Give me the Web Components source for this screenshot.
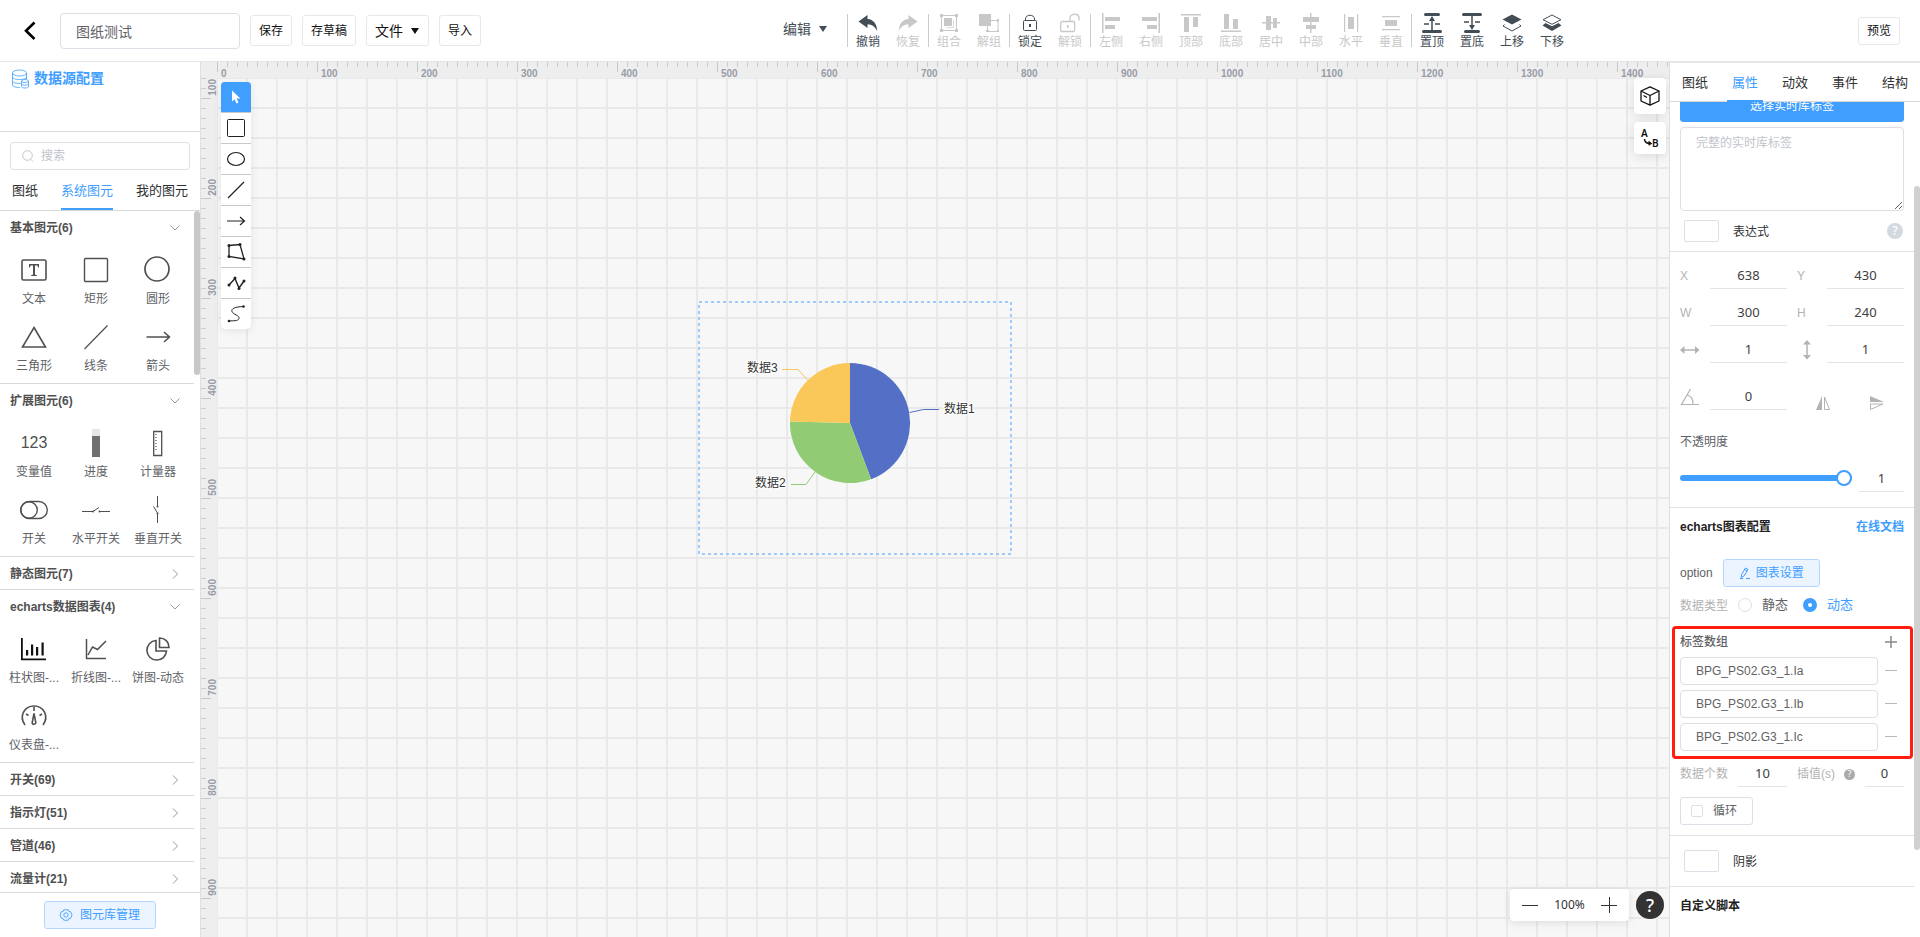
<!DOCTYPE html>
<html lang="zh-CN">
<head>
<meta charset="utf-8">
<title>图纸测试</title>
<style>
  html, body { margin: 0; height: 100%; }
  body {
    font: 12px/16px "Liberation Sans", "Noto Sans CJK SC", sans-serif;
    color: #606266;
    background: #fff;
    --blue: #409eff;
    --line: #dcdfe6;
    --digits: "Noto Sans", "Noto Sans CJK SC", sans-serif;
  }
</style>
</head>
<body>
<editor-app></editor-app>

<script>
/* ---------- icons: [width, height, markup] ---------- */
const S = 'fill="none" stroke="currentColor"';
const ICONS = {
  back: [14, 20, `<path ${S} stroke-width="2.6" d="M11.5 1.5L3 9.8l8.500 8.200"/>`],
  caret: [10, 10, `<path fill="currentColor" d="M1 2h8L5 8z"/>`],
  db: [18, 20, `<g ${S} stroke-width=".8"><ellipse cx="7.500" cy="4" rx="7" ry="3"/><path d="M.5 4v12c0 1.500 3 2.500 7.500 2.500M14.500 4v6M.5 8c0 1.500 3 2.500 7 2.500s7-1 7-2.500M.5 12c0 1.500 3 2.500 8 2.500"/><ellipse cx="13" cy="12" rx="3.500" ry="1.500"/><path d="M9.500 12v5.500c0 1 1.500 1.500 3.500 1.500s3.500-.5 3.500-1.500V12M9.500 14.700c0 1 1.500 1.500 3.500 1.500s3.500-.5 3.500-1.500"/></g>`],
  search: [12, 12, `<g ${S}><circle cx="5.500" cy="5.500" r="4.800"/><path d="M9 9.500l2 2"/></g>`],
  down: [10, 10, `<path ${S} d="M.5 2.500L5 7l4.500-4.500"/>`],
  right: [10, 10, `<path ${S} d="M3 .5L7.500 5 3 9.500"/>`],
  gear: [12, 12, `<g ${S} stroke-width=".9"><path d="M3.800.8h4.400l.7 1.700 1.800.3L12 6l-1.300 3.200-1.800.3-.7 1.700H3.800l-.7-1.700-1.800-.3L0 6l1.300-3.200 1.800-.3z"/><circle cx="6" cy="6" r="2.200"/></g>`],
  pencil: [12, 12, `<g ${S}><path d="M2.500 7.500L6.500 1l2.500 1.500L5 9l-2.700 1.500zM5.700 2.500l2.500 1.500M1 11.500h3M7 11.500h4"/></g>`],
  plus: [12, 12, `<path ${S} stroke-width="1.500" d="M6 0v12M0 6h12"/>`],
  minus: [12, 12, `<path ${S} d="M0 5.500h12"/>`],
  bigplus: [16, 16, `<path ${S} d="M8.500 0v16M0 8.500h16"/>`],
  bigminus: [16, 16, `<path ${S} d="M0 8.500h16"/>`],

  undo: [20, 20, `<path fill="currentColor" d="M.5 8.500L9.500 2v4c6 .5 9.500 5 9.700 12.300C17 13.500 14 11.500 9.500 11.300V15z"/>`],
  redo: [20, 20, `<path fill="currentColor" d="M19.500 8.500L10.500 2v4C4.500 6.500 1 11 .8 18.300 3 13.500 6 11.500 10.500 11.300V15z"/>`],
  group: [20, 20, `<path ${S} d="M2.500 2.500h15v15h-15z"/><path fill="currentColor" d="M1 1h3v3H1zM16 1h3v3h-3zM1 16h3v3H1zM16 16h3v3h-3zM5 5h8v8H5z"/><path fill="currentColor" opacity=".6" d="M14 7h1v8H7v-1h7z"/>`],
  ungroup: [20, 20, `<path fill="currentColor" d="M0 1h12v12H0z"/><path ${S} d="M12 7.500h7v11H8.500V13"/><path fill="currentColor" d="M18 6h2v3h-2zM18 17h2v2h-2zM7 17h3v2H7z"/>`],
  lock: [20, 20, `<g ${S}><rect x="3.500" y="7.500" width="13" height="10" rx="1"/><path d="M5.500 7.500V6C5.500 1 14.500 1 14.500 6v1.500"/></g><path fill="currentColor" d="M9 11h2v3H9z"/>`],
  unlock: [20, 20, `<g ${S} stroke-width="1.300"><rect x=".7" y="8.500" width="14" height="10" rx="1.500"/><path d="M10 8.500V5C10 0 19 0 19 5v2.500"/></g><path fill="currentColor" d="M7 12h1.500v3H7z"/>`],
  aleft: [20, 20, `<path fill="currentColor" d="M1 0h1.500v20H1zM4 4h15v4H4zM4 12h10v4H4z"/>`],
  aright: [20, 20, `<path fill="currentColor" d="M17.500 0H19v20h-1.500zM1 4h15v4H1zM6 12h10v4H6z"/>`],
  atop: [20, 20, `<path fill="currentColor" d="M0 1h20v1.500H0zM3 4h5v15H3zM12 4h5v10h-5z"/>`],
  abottom: [20, 20, `<path fill="currentColor" d="M0 17.500h20V19H0zM3 1h5v15H3zM12 6h5v10h-5z"/>`],
  amiddle: [20, 20, `<path fill="currentColor" d="M1 9h18v1.500H1zM5 3h5v14H5zM12 5h4v10h-4z"/>`],
  acenter: [20, 20, `<path fill="currentColor" d="M9 0h1.500v20H9zM2 4h16v5H2zM5 12h10v4H5z"/>`],
  hdist: [20, 20, `<path fill="currentColor" d="M3 1h1.200v18H3zM16 1h1.200v18H16zM7 4h6v12H7z"/>`],
  vdist: [20, 20, `<path fill="currentColor" d="M1 3h18v1.200H1zM1 16h18v1.200H1zM4 7h12v6H4z"/>`],
  totop: [20, 20, `<g ${S} stroke-width="3" stroke-linecap="round"><path d="M3.500 1.500h13M1.500 18.500h17"/></g><path ${S} stroke-width="1.500" d="M10 17V6M2 11h5M13 11h5"/><path fill="currentColor" d="M10 3l3 5H7z"/>`],
  tobottom: [20, 20, `<g ${S} stroke-width="3" stroke-linecap="round"><path d="M1.500 1.500h17M3.500 18.500h13"/></g><path ${S} stroke-width="1.500" d="M10 3v11M2 9h5M13 9h5"/><path fill="currentColor" d="M10 17l3-5H7z"/>`],
  up: [20, 20, `<path fill="currentColor" d="M10 1.500l9.500 5-9.500 5-9.500-5z"/><path ${S} d="M2.500 11.500L1 13l9 5 9-5-1.500-1.500"/>`],
  lower: [20, 20, `<path ${S} d="M10 2l9 4.700-9 4.600-9-4.600z"/><path fill="currentColor" d="M3.500 10l6.500 3.300L16.500 10l3 2.500L10 18 .5 12.500z"/>`],

  pointer: [16, 16, `<path fill="currentColor" d="M4 1.500v11l2.600-2.200 1.900 4.200 2-.9-1.900-4h3.800z"/>`],
  tRect: [20, 20, `<rect ${S} x="1.500" y="1.500" width="17" height="17" rx="1"/>`],
  tEllipse: [20, 20, `<ellipse ${S} stroke-width="1.200" cx="10" cy="10" rx="8.500" ry="6.500"/>`],
  tLine: [20, 20, `<path ${S} stroke-width="1.200" d="M2 18L18 2"/>`],
  tArrow: [20, 20, `<path ${S} stroke-width="1.200" d="M1 10h17M14 6l4.500 4-4.500 4"/>`],
  tPoly: [20, 20, `<path ${S} stroke-width="1.300" d="M3 3.500l11-1 4 14.500-15-2.500z"/><g fill="currentColor"><circle cx="3" cy="3.500" r="1.500"/><circle cx="14" cy="2.500" r="1.500"/><circle cx="18" cy="17" r="1.500"/><circle cx="3" cy="14.500" r="1.500"/></g>`],
  tZig: [20, 20, `<path ${S} stroke-width="1.400" d="M3 12l6-6.500L13 15l5-7"/><g fill="currentColor"><circle cx="3" cy="12" r="1.500"/><circle cx="9" cy="5" r="1.500"/><circle cx="13" cy="15.500" r="1.500"/><circle cx="18" cy="8" r="1.500"/></g>`],
  tCurve: [20, 20, `<path ${S} d="M17 2.500C9 3 5 4.500 6 7.500s8 4 7 7S7 16.500 3 17"/><g fill="currentColor"><circle cx="17.500" cy="2.500" r="1.300"/><circle cx="3" cy="17" r="1.300"/></g>`],
  cube: [20, 20, `<g ${S} stroke-width="1.300" stroke-linejoin="round"><path d="M10 .8l9 4.200v10l-9 4.200L1 15V5zM1 5l9 4.500L19 5M10 9.500V19"/><path d="M3.500 9.500l3.500 2"/></g>`],
  ab: [20, 20, `<g fill="currentColor" font-family="Noto Sans, sans-serif" font-size="10" font-weight="600"><text x="1" y="9">A</text><text x="12" y="19">B</text></g><path ${S} stroke-width="1.500" d="M4.500 11c0 3 2.500 4.500 6 4.500M8.500 13.500l2.500 2-2.500 1.500"/>`],

  text: [28, 28, `<g ${S} stroke-width="1.600"><rect x="2" y="4" width="24" height="20" rx="1.500"/></g><path fill="currentColor" d="M9 8h10v3.500h-1L17.500 9.500H15v9.300l1.800.2v1H11.200v-1l1.800-.2V9.500h-2.500L10 11.500H9z"/>`],
  rect: [28, 28, `<rect ${S} stroke-width="1.400" x="2.500" y="2.500" width="23" height="23" rx="1"/>`],
  circle: [28, 28, `<circle ${S} stroke-width="1.700" cx="13" cy="13" r="12"/>`],
  triangle: [28, 28, `<path ${S} stroke-width="1.600" d="M14 4.500L25.500 24h-23z"/>`],
  line: [28, 28, `<path ${S} stroke-width="1.200" d="M2.500 26L25.500 2.500"/>`],
  arrow: [28, 28, `<path ${S} stroke-width="1.500" d="M2.500 14h22M20 9l5.500 5-5.500 5"/>`],
  n123: [28, 28, `<text x="14" y="19" text-anchor="middle" fill="currentColor" font-family="Liberation Sans, sans-serif" font-size="16">123</text>`],
  progress: [28, 28, `<path fill="#e6e6e6" d="M10 0h8v7h-8z"/><path fill="#707070" d="M10 7h8v21h-8z"/>`],
  gauge: [28, 28, `<path ${S} stroke-width="1.300" d="M9.700 2.500h8v24h-8z"/><path ${S} stroke-width="2" stroke-dasharray="1 2" opacity=".6" d="M12 5v18"/>`],
  toggle: [28, 28, `<g ${S} stroke-width="1.400"><rect x=".8" y="5.500" width="26.500" height="17" rx="8.500"/><circle cx="9" cy="14" r="8.300"/></g>`],
  hswitch: [28, 28, `<g ${S}><path d="M0 15.500h11l6-4M17 15.500h11"/></g><circle cx="11" cy="15.500" r="1" fill="currentColor"/><circle cx="17.500" cy="15.500" r="1" fill="currentColor"/>`],
  vswitch: [28, 28, `<g ${S}><path d="M13.500 0v10.500M9.500 10.500l4 6.500v10"/></g><circle cx="13.500" cy="10.500" r="1" fill="currentColor"/><circle cx="13.500" cy="17.500" r="1" fill="currentColor"/>`],
  bars: [28, 28, `<path fill="#111" d="M1 3h1.800v20.500H26v1.700H1zM6 15h2.200v5.500H6zM11 9.500h2.200v11H11zM16 12h2.200v8.500H16zM21.500 7.500h2.200v13h-2.200z"/>`],
  trend: [28, 28, `<g ${S} stroke-width="1.500"><path d="M4.500 4v19.500H24M6 20l4.500-8 5 2.500L24 6"/></g>`],
  pie: [28, 28, `<g ${S} stroke-width="1.600"><path d="M12 5.500A9.800 9.800 0 1 0 22.500 16H12z"/><path d="M15.500 3v9.500H25C25 7 21 3 15.500 3z"/></g>`],
  dial: [28, 28, `<g ${S} stroke-width="1.600"><path d="M5 23C-1.500 14 4.500 4 14 4s15.500 10 9 19"/><path d="M14 5v4M6 12l2.500 1.500M22 12l-2.500 1.500"/><path d="M14 11.500l1.800 9a1.800 1.800 0 0 1-3.600 0z"/></g>`],

  hsize: [20, 20, `<path ${S} stroke-width="1.500" d="M3 10h14"/><path fill="currentColor" d="M0 10l4.500-4v8zM19.500 10L15 6v8z"/>`],
  vsize: [20, 20, `<path ${S} stroke-width="1.500" d="M10 3v14"/><path fill="currentColor" d="M10 0l4 4.500H6zM10 19.500l4-4.500H6z"/>`],
  angle: [20, 20, `<path ${S} stroke-width="1.200" d="M19 17.500H1.500L10.500 2M7.500 8c3.500 1 5.500 4.500 5.500 9"/>`],
  fliph: [16, 16, `<path fill="currentColor" d="M7 1v14H1z"/><path ${S} d="M9.500 2v12.500h5z"/>`],
  flipv: [16, 16, `<path fill="currentColor" d="M1 1v6h14z"/><path ${S} d="M1.500 9v5.500L14 9z"/>`]
};

const define = (name, css, html, setup) => {
  const tpl = document.createElement('template');
  tpl.innerHTML = `<style>*{box-sizing:border-box}button,input,textarea{font:inherit;color:inherit;margin:0}button{cursor:pointer}${css}</style>${html}`;
  customElements.define(name, class extends HTMLElement {
    constructor() {
      super();
      this.attachShadow({ mode: 'open' }).append(tpl.content.cloneNode(true));
    }
    connectedCallback() { if (setup && !this.ready) { this.ready = true; setup(this, this.shadowRoot); } }
  });
};

define('ui-icon', `:host{display:inline-flex;flex:none}svg{display:block;overflow:visible}`, `<svg aria-hidden="true"></svg>`, (el, root) => {
  const [w, h, body] = ICONS[el.getAttribute('name')];
  const svg = root.querySelector('svg');
  svg.setAttribute('width', w);
  svg.setAttribute('height', h);
  svg.innerHTML = body;
});

/* round question mark */
define('help-dot', `
  :host{display:inline-flex;flex:none;width:var(--d,16px);height:var(--d,16px);border-radius:50%;align-items:center;justify-content:center;
    background:var(--bg,#d3d9e0);color:#fff;font:500 var(--fs,12px)/1 var(--digits)}`, `<span>?</span>`);

/* plain (bordered), tinted and solid buttons */
define('ui-button', `
  :host{display:inline-flex;flex:none}
  button{display:flex;flex:1;align-items:center;justify-content:center;gap:var(--gap,8px);height:var(--h,28px);padding:0 var(--px,8px);
    border:1px solid #e8e8e8;border-radius:3px;background:#fff;color:#111;white-space:nowrap}
  :host([kind=tint]) button{background:#ecf5ff;border-color:#b3d8ff;color:var(--blue)}
  :host([kind=solid]) button{background:var(--blue);border-color:var(--blue);color:#fff}
`, `<button type="button"><slot></slot></button>`);

/* ---------- top bar ---------- */
const action = (icon, label, off) => `<button type="button"${off ? ' disabled' : ''}><ui-icon name="${icon}"></ui-icon><span>${label}</span></button>`;

define('top-bar', `
  :host{display:flex;justify-content:space-between;align-items:center;height:62px;border-bottom:1px solid #e6e6e6;background:#fff}
  .left,.tools{display:flex;align-items:center}
  .left{gap:10px;padding-left:23px}
  .back{display:flex;width:27px;padding:0;border:0;background:none;color:#000}
  input{width:180px;height:36px;padding:0 15px;border:1px solid var(--line);border-radius:4px;font-size:14px;color:#606266}
  .left ui-button{--h:31px}
  .file{font-size:14px;--gap:7px}
  .tools>button{display:flex;flex-direction:column;align-items:center;gap:1px;width:40px;height:61px;padding:13px 0 0;border:0;background:none;color:#434d55}
  .tools>button:disabled{color:#c8c8c8;cursor:default}
  .tools>.edit{flex-direction:row;gap:7px;width:80px;height:28px;padding:0 0 4px 16px;font-size:14px}
  i{width:1px;height:33px;background:#ccc}
  .preview{margin-right:20px}
`, `
  <div class="left">
    <button class="back" type="button" aria-label="返回"><ui-icon name="back"></ui-icon></button>
    <input aria-label="图纸名称" value="图纸测试">
    <ui-button>保存</ui-button><ui-button>存草稿</ui-button>
    <ui-button class="file">文件<ui-icon name="caret"></ui-icon></ui-button><ui-button>导入</ui-button>
  </div>
  <div class="tools">
    <button class="edit" type="button">编辑<ui-icon name="caret"></ui-icon></button>
    <i></i>${action('undo', '撤销')}${action('redo', '恢复', 1)}
    <i></i>${action('group', '组合', 1)}${action('ungroup', '解组', 1)}
    <i></i>${action('lock', '锁定')}${action('unlock', '解锁', 1)}
    <i></i>${action('aleft', '左侧', 1)}${action('aright', '右侧', 1)}${action('atop', '顶部', 1)}${action('abottom', '底部', 1)}${action('amiddle', '居中', 1)}${action('acenter', '中部', 1)}${action('hdist', '水平', 1)}${action('vdist', '垂直', 1)}
    <i></i>${action('totop', '置顶')}${action('tobottom', '置底')}${action('up', '上移')}${action('lower', '下移')}
  </div>
  <ui-button class="preview">预览</ui-button>
`);

/* ---------- tabs ---------- */
define('tab-strip', `
  :host{display:flex;border-bottom:1px solid #d9d9d9;font-size:13px;line-height:18px;color:#303133}
  ::slotted(button){flex:none;box-sizing:border-box;margin:0 0 -1px;padding:3px 0 0;border:0;border-bottom:2px solid transparent;background:none;cursor:pointer}
  ::slotted([aria-selected=true]){color:var(--blue)!important;border-color:var(--blue)}
`, `<slot></slot>`, el => el.setAttribute('role', 'tablist'));

/* ---------- shape library ---------- */
const GROUPS = {
  '基本图元(6)': [['text', '文本'], ['rect', '矩形'], ['circle', '圆形'], ['triangle', '三角形'], ['line', '线条'], ['arrow', '箭头']],
  '扩展图元(6)': [['n123', '变量值'], ['progress', '进度'], ['gauge', '计量器'], ['toggle', '开关'], ['hswitch', '水平开关'], ['vswitch', '垂直开关']],
  '静态图元(7)': null,
  'echarts数据图表(4)': [['bars', '柱状图-...'], ['trend', '折线图-...'], ['pie', '饼图-动态'], ['dial', '仪表盘-...']],
  '开关(69)': null, '指示灯(51)': null, '管道(46)': null, '流量计(21)': null
};

const shape = ([icon, label]) => `<button class="shape" type="button"><ui-icon name="${icon}"></ui-icon><span>${label}</span></button>`;

define('shape-group', `
  :host{display:block;border-bottom:1px solid #d5dade}
  .head{display:flex;align-items:center;justify-content:space-between;width:100%;height:32px;padding:1px 14px 0 10px;border:0;background:none;font-weight:bold;color:#505050}
  .head ui-icon{color:#999}
  .body{display:grid;grid-template-columns:repeat(3,1fr);padding:1px 5px 5px 3px}
  .body:empty{display:none}
  .shape{display:flex;flex-direction:column;align-items:center;gap:6px;min-width:0;height:67px;padding:12px 0 0;border:0;background:none;color:#505050}
  .shape span{white-space:nowrap;line-height:18px;color:#606266}
`, `<button class="head" type="button"><span></span></button><div class="body"></div>`, (el, root) => {
  const items = GROUPS[el.getAttribute('label')];
  const head = root.querySelector('.head');
  head.setAttribute('aria-expanded', !!items);
  head.querySelector('span').textContent = el.getAttribute('label');
  head.insertAdjacentHTML('beforeend', `<ui-icon name="${items ? 'down' : 'right'}"></ui-icon>`);
  if (items) root.querySelector('.body').innerHTML = items.map(shape).join('');
});

define('shape-panel', `
  :host{display:flex;flex-direction:column;min-height:0;border-right:1px solid var(--line);background:#fff}
  .source{display:flex;gap:4px;height:70px;padding:7px 0 0 12px;border-bottom:1px solid #d9d9d9;font-weight:bold;font-size:14px;line-height:18px;color:var(--blue);text-decoration:none}
  .search{display:flex;align-items:center;gap:7px;height:28px;margin:10px 10px 0;padding:0 11px;border:1px solid var(--line);border-radius:4px;color:#c0c4cc}
  .search input{flex:1;min-width:0;padding:0;border:0;outline:0;background:none;color:#606266}
  ::placeholder{color:#c0c4cc;opacity:1}
  tab-strip{gap:23px;height:41px;padding-left:12px}
  .list{display:grid;grid-template-columns:1fr 6px;flex:1;min-height:0;overflow:hidden}
  .groups{min-width:0;height:0}
  .bar{height:164px;border-radius:3px;background:#c8c8c8}
  .foot{display:flex;justify-content:center;height:45px;padding-top:8px;border-top:1px solid #d9d9d9;background:#fff}
  .foot ui-button{--px:15px;--gap:8px}
`, `
  <a class="source" href="#source"><ui-icon name="db"></ui-icon>数据源配置</a>
  <label class="search"><ui-icon name="search"></ui-icon><input type="search" placeholder="搜索" aria-label="搜索"></label>
  <tab-strip><button role="tab">图纸</button><button role="tab" aria-selected="true">系统图元</button><button role="tab">我的图元</button></tab-strip>
  <div class="list"><div class="groups">${Object.keys(GROUPS).map(g => `<shape-group label="${g}"></shape-group>`).join('')}</div><div class="bar"></div></div>
  <div class="foot"><ui-button kind="tint"><ui-icon name="gear"></ui-icon>图元库管理</ui-button></div>
`);

/* ---------- canvas ---------- */
define('canvas-ruler', `
  :host{display:block;min-width:0;min-height:0;overflow:hidden;background-color:#eee;font:bold 10px/12px "Liberation Sans",sans-serif;color:#979ca7}
  div{display:flex}
  span{flex:none;width:100px;height:16px;padding:6px 0 0 4px;
    background:linear-gradient(#c4c7cc,#c4c7cc) 0 0/1px 10px no-repeat,repeating-linear-gradient(90deg,#c9ccd1 0 1px,transparent 1px 10px) 0 0/100% 5px no-repeat}
  :host([vertical]) div{flex-direction:column}
  :host([vertical]) span{display:flex;justify-content:flex-end;align-items:flex-end;width:16px;height:100px;padding:0 0 3px;
    background:linear-gradient(#c4c7cc,#c4c7cc) 0 100%/10px 1px no-repeat,repeating-linear-gradient(0deg,#c9ccd1 0 1px,transparent 1px 10px) 0 100%/5px 100% no-repeat}
  :host([vertical]) span:first-child{height:21px}
  b{display:block}
  :host([vertical]) b{writing-mode:vertical-rl;transform:rotate(180deg);margin-right:-2px}
`, `<div></div>`, (el, root) => {
  const vertical = el.hasAttribute('vertical');
  const track = root.querySelector('div');
  /* one cell per 100 units; a label is written only where it fits whole */
  const draw = () => {
    const size = vertical ? el.clientHeight : el.clientWidth;
    let html = '';
    for (let n = vertical ? 100 : 0, at = 0; at < size; n += 100) {
      const length = vertical && n === 100 ? 21 : 100;
      const fits = vertical ? at + length <= size : at + 30 <= size;
      html += `<span>${fits ? `<b>${n}</b>` : ''}</span>`;
      at += length;
    }
    track.innerHTML = html;
  };
  draw();
  new ResizeObserver(draw).observe(el);
});

define('tool-palette', `
  :host{display:flex;flex-direction:column;gap:1px;border-radius:4px;overflow:hidden;background:#c9c9c9;box-shadow:0 2px 8px rgba(0,0,0,.08)}
  button{display:flex;align-items:center;justify-content:center;width:30px;height:30px;padding:0;border:0;background:#fff;color:#222}
  button[aria-pressed=true]{background:var(--blue);color:#fff}
`, ['pointer', 'tRect', 'tEllipse', 'tLine', 'tArrow', 'tPoly', 'tZig', 'tCurve'].map((t, i) =>
  `<button type="button" aria-label="${t}" aria-pressed="${i === 0}"><ui-icon name="${t}"></ui-icon></button>`).join(''));

define('pie-chart', `
  :host{display:block;width:314px;height:254px}
  svg{display:block;overflow:visible}
  text{font:12px "Liberation Sans","Noto Sans CJK SC",sans-serif;fill:#333;stroke:#fff;stroke-width:2px;paint-order:stroke}
`, `<svg width="314" height="254" role="img" aria-label="饼图">
  <rect x="1" y="1" width="312" height="252" fill="none" stroke="#9bcbff" stroke-width="2" stroke-dasharray="3 3"/>
  <path fill="#5470c6" d="M152 122V62A60 60 0 0 1 173.100 178.200z"/>
  <path fill="#91cc75" d="M152 122L173.100 178.200A60 60 0 0 1 92 120.600z"/>
  <path fill="#fac858" d="M152 122L92 120.600A60 60 0 0 1 152 62z"/>
  <g fill="none" stroke-width="1"><path stroke="#5470c6" d="M211.500 111.500l14-3h15.500"/><path stroke="#91cc75" d="M117 171l-9 12.500H93"/><path stroke="#fac858" d="M110 79.500L100 68.500H84"/></g>
  <text x="246" y="112">数据1</text><text x="57" y="186">数据2</text><text x="49" y="71">数据3</text>
</svg>`);

define('canvas-board', `
  :host{display:grid;grid-template:16px minmax(0,1fr)/16px minmax(0,1fr);min-width:0;min-height:0;overflow:hidden}
  .corner{background:#eee}
  .stage{position:relative;background-color:#f7f7f7;
    background-image:linear-gradient(90deg,#e9e9e9 2px,transparent 2px),linear-gradient(#e9e9e9 2px,transparent 2px);background-size:30px 30px;background-position:-1px -1px}
  tool-palette{position:absolute;left:4px;top:4px}
  pie-chart{position:absolute;left:481px;top:223px}
  .views{position:absolute;right:3px;top:0;display:grid;gap:8px}
  .views button{display:flex;align-items:center;justify-content:center;width:32px;height:32px;padding:0;border:0;border-radius:4px;background:#fff;color:#111;box-shadow:0 2px 12px rgba(0,0,0,.12)}
  .views button:first-child{height:36px}
  .zoom{position:absolute;right:5px;bottom:16px;display:flex;align-items:center;gap:7px}
  .box{display:flex;align-items:center;justify-content:space-between;width:119px;height:32px;padding:0 12px;border-radius:4px;background:#fff;box-shadow:0 2px 8px rgba(0,0,0,.1);color:#333;font-family:var(--digits)}
  .box button{display:flex;padding:0;border:0;background:none}
  .help{display:flex;padding:0;border:0;background:none}
  help-dot{--d:28px;--bg:#333;--fs:18px}
`, `
  <div class="corner"></div><canvas-ruler></canvas-ruler><canvas-ruler vertical></canvas-ruler>
  <div class="stage">
    <pie-chart></pie-chart>
    <tool-palette></tool-palette>
    <div class="views"><button type="button" aria-label="三维"><ui-icon name="cube"></ui-icon></button><button type="button" aria-label="连线"><ui-icon name="ab"></ui-icon></button></div>
    <div class="zoom">
      <div class="box"><button type="button" aria-label="缩小"><ui-icon name="bigminus"></ui-icon></button><span>100%</span><button type="button" aria-label="放大"><ui-icon name="bigplus"></ui-icon></button></div>
      <button class="help" type="button" aria-label="帮助"><help-dot></help-dot></button>
    </div>
  </div>
`);

/* ---------- properties ---------- */
const num = (label, value, icon) => `<label class="num"><span${icon ? ` aria-label="${label}"` : ''}>${icon ? `<ui-icon name="${icon}"></ui-icon>` : label}</span><input value="${value}"></label>`;
const tag = v => `<div class="tag"><input value="${v}" aria-label="标签"><button type="button" aria-label="删除"><ui-icon name="minus"></ui-icon></button></div>`;

define('prop-panel', `
  :host{display:flex;flex-direction:column;min-width:0;min-height:0;border-left:1px solid var(--line);background:#fff}
  tab-strip{flex:none;height:40px;border-top:1px solid #e6e6e6}
  tab-strip button{width:50px}
  tab-strip button[aria-selected]{width:36px;margin:0 7px -1px}
  .view{display:grid;grid-template-columns:minmax(0,1fr) 6px;flex:1;min-height:0;overflow:hidden}
  .scroll{height:0}
  .bar{height:664px;margin-top:84px;border-radius:3px;background:#d0d0d0}
  section{padding:0 10px;border-bottom:1px solid #e2e2e2}
  section:last-child{border:0}
  .wide{display:flex;--h:32px;margin-top:-12px}
  textarea{display:block;width:100%;height:84px;margin-top:5px;padding:7px 15px;border:1px solid var(--line);border-radius:4px;resize:vertical}
  ::placeholder{color:#c0c4cc;opacity:1}
  .swatch{display:flex;align-items:center;padding-left:4px;gap:14px;color:#303133}
  .swatch label{flex:1;padding-top:2px}
  .swatch input{appearance:none;width:35px;height:22px;border:1px solid var(--line);border-radius:2px}
  .expr{height:40px;padding-right:1px}
  .shadow{height:50px}
  .nums{display:grid;grid-template-columns:1fr 1fr;column-gap:10px;padding-top:10px}
  .num{display:flex;align-items:center;height:27px;margin-bottom:10px;color:#b3b3b3}
  .num>span{width:30px;display:flex}
  .num input,.line{flex:1;min-width:0;width:0;height:27px;padding:0;border:0;border-bottom:1px solid #e4e4e4;outline:0;background:none;text-align:center;font:13px var(--digits);color:#404040}
  .rot{margin-top:10px}
  .flips{display:flex;justify-content:space-between;align-items:center;padding:12px 19px 0 18px;color:#b3b3b3}
  .flips button{display:flex;padding:0;border:0;background:none;color:inherit}
  .cap{display:block;margin-top:14px}
  .opacity{display:flex;align-items:center;gap:7px;height:28px;margin:14px 0 15px}
  input[type=range]{appearance:none;width:172px;height:16px;background:none}
  input[type=range]::-webkit-slider-runnable-track{height:6px;border-radius:3px;background:var(--blue)}
  input[type=range]::-webkit-slider-thumb{appearance:none;box-sizing:border-box;width:16px;height:16px;margin-top:-5px;border:2px solid var(--blue);border-radius:50%;background:#fff}
  h3{margin:0;font-size:12px;line-height:16px;color:#222}
  a{color:var(--blue);text-decoration:none;font-weight:bold}
  .row{display:flex;align-items:center}
  .title{justify-content:space-between;height:38px}
  .option{gap:10px;margin-top:13px}
  .option ui-button{--px:15px;--gap:5px}
  .kind{height:20px;margin-top:8px;font-size:13px}
  .kind>span{width:58px;font-size:12px;color:#b3b3b3;padding-top:2px}
  .kind label{display:flex;align-items:center;gap:10px;margin-right:15px}
  input[type=radio]{appearance:none;width:14px;height:14px;border:1px solid var(--line);border-radius:50%;background:#fff}
  input[type=radio]:checked{border:5px solid var(--blue)}
  input[type=radio]:checked+span{color:var(--blue)}
  .tags{display:grid;gap:5px;margin:11px -9px 0 -8px;padding:3px 5px 5px;border:3px solid #ff1e0f;border-radius:4px}
  .tags header{display:flex;align-items:center;justify-content:space-between;height:20px;padding-right:8px;font-weight:500}
  .tags header button,.tag button{display:flex;padding:0;border:0;background:none;color:#888}
  .tag{display:flex;align-items:center;gap:7px}
  .tag input{width:198px;height:28px;padding:0 15px;border:1px solid var(--line);border-radius:4px}
  .tag button{color:#b8b8b8}
  .count{height:28px;color:#b3b3b3}
  .count label{padding-top:2px}
  .count [for=cnt]{width:58px}
  .count [for=ins]{padding-left:10px}
  .count #ins{flex:none;width:39px}
  .count help-dot{--d:11px;--bg:#aaa;--fs:8px;margin:2px 10px 0 9px}
  .loop{display:inline-flex;align-items:center;gap:10px;height:28px;margin:10px 0;padding:0 15px 0 10px;border:1px solid var(--line);border-radius:3px}
  .loop input{appearance:none;width:12px;height:12px;border:1px solid var(--line);border-radius:2px}
`, `
  <tab-strip><button role="tab">图纸</button><button role="tab" aria-selected="true">属性</button><button role="tab">动效</button><button role="tab">事件</button><button role="tab">结构</button></tab-strip>
  <div class="view"><div class="scroll">
    <section>
      <ui-button class="wide" kind="solid">选择实时库标签</ui-button>
      <textarea placeholder="完整的实时库标签" aria-label="实时库标签"></textarea>
      <div class="swatch expr"><input type="checkbox" id="expr"><label for="expr">表达式</label><help-dot></help-dot></div>
    </section>
    <section>
      <div class="nums">${num('X', 638)}${num('Y', 430)}${num('W', 300)}${num('H', 240)}${num('横向缩放', 1, 'hsize')}${num('纵向缩放', 1, 'vsize')}
        <div class="rot">${num('旋转', 0, 'angle')}</div>
        <div class="flips"><button type="button" aria-label="水平翻转"><ui-icon name="fliph"></ui-icon></button><button type="button" aria-label="垂直翻转"><ui-icon name="flipv"></ui-icon></button></div>
      </div>
      <label class="cap" for="op">不透明度</label>
      <div class="opacity"><input id="op" type="range" min="0" max="1" step="0.01" value="1"><input class="line" value="1" aria-label="不透明度数值"></div>
    </section>
    <section>
      <div class="row title"><h3>echarts图表配置</h3><a href="#doc">在线文档</a></div>
      <div class="row option"><span>option</span><ui-button kind="tint"><ui-icon name="pencil"></ui-icon>图表设置</ui-button></div>
      <div class="row kind"><span>数据类型</span><label><input type="radio" name="kind"><span>静态</span></label><label><input type="radio" name="kind" checked><span>动态</span></label></div>
      <div class="tags"><header>标签数组<button type="button" aria-label="添加"><ui-icon name="plus"></ui-icon></button></header>${['BPG_PS02.G3_1.Ia', 'BPG_PS02.G3_1.Ib', 'BPG_PS02.G3_1.Ic'].map(tag).join('')}</div>
      <div class="row count"><label for="cnt">数据个数</label><input class="line" id="cnt" value="10"><label for="ins">插值(s)</label><help-dot></help-dot><input class="line" id="ins" value="0"></div>
      <label class="loop"><input type="checkbox">循环</label>
    </section>
    <section><div class="swatch shadow"><input type="checkbox" id="shadow"><label for="shadow">阴影</label></div></section>
    <section><div class="row title"><h3>自定义脚本</h3></div></section>
  </div><div class="bar"></div></div>
`);

/* ---------- shell ---------- */
define('editor-app', `
  :host{display:grid;grid-template:62px minmax(0,1fr)/201px minmax(0,1fr) 251px;height:100vh;overflow:hidden}
  top-bar{grid-column:1/-1}
`, `<top-bar></top-bar><shape-panel></shape-panel><canvas-board></canvas-board><prop-panel></prop-panel>`);
</script>
</body>
</html>
